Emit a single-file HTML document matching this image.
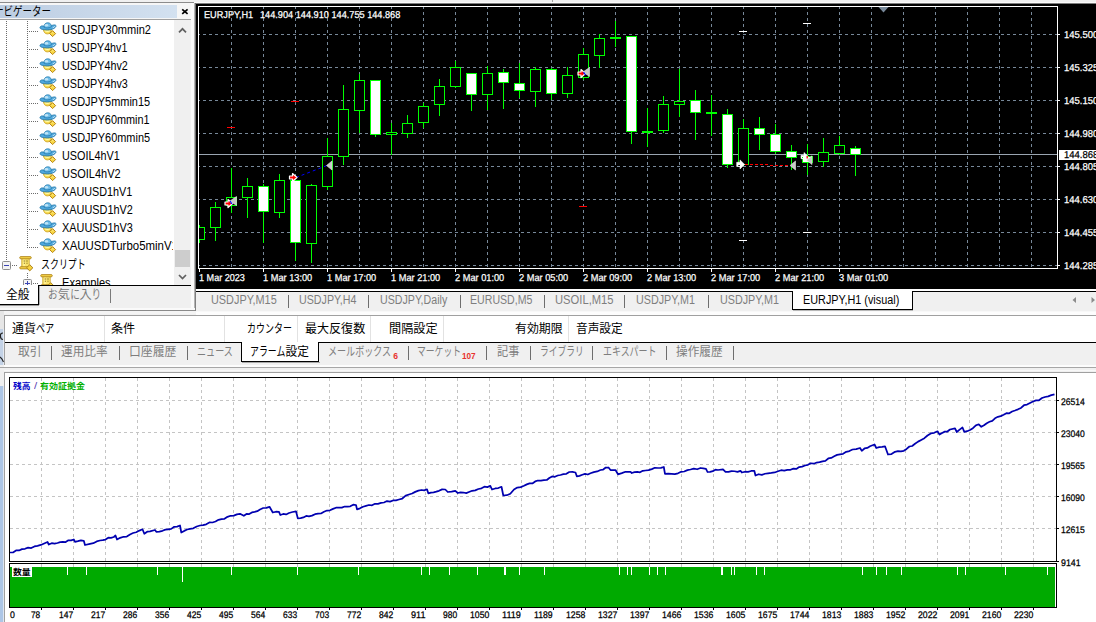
<!DOCTYPE html><html lang="ja"><head><meta charset="utf-8"><title>MT4</title><style>
html,body{margin:0;padding:0;background:#f0f0f0;}
#root{position:relative;width:1096px;height:622px;overflow:hidden;background:#f0f0f0;font-family:"Liberation Sans","Noto Sans CJK JP",sans-serif;}
#root div,#root svg{position:absolute;}
.t{white-space:pre;transform-origin:0 0;}
.gp{text-rendering:geometricPrecision;-webkit-text-stroke:0.25px currentColor;}
.k{display:inline-block;vertical-align:baseline;height:1em;}
.k>span{display:inline-block;transform-origin:0 0;white-space:nowrap;}
#root div.t .k{position:static;}
</style></head><body><div id="root"><div style="left:0px;top:0px;width:1096px;height:2px;background:#f0f0f0;"></div><div style="left:0px;top:2px;width:1096px;height:1px;background:#fbfbfb;"></div><div style="left:0px;top:3px;width:1096px;height:1px;background:#7d7d7d;"></div><div style="left:552px;top:0px;width:1px;height:2px;background:#a0a0a0;"></div><div style="left:0px;top:3px;width:191px;height:308px;background:#f0f0f0;"></div><div style="left:0px;top:2px;width:194px;height:1px;background:#8c8c8c;"></div><div style="left:0px;top:3px;width:191px;height:17px;background:#f6f6f6;"></div><div style="left:0px;top:5px;width:177px;height:13px;background:linear-gradient(90deg,#bccde2,#d3e1f0);"></div><div style="left:0px;top:19px;width:191px;height:1px;background:#a0a0a0;"></div><div style="left:0px;top:20px;width:174px;height:266px;background:#fff;"></div><div style="left:174px;top:20px;width:17px;height:266px;background:#f0f0f0;"></div><div style="left:191px;top:3px;width:4px;height:308px;background:#fafafa;"></div><div style="left:194px;top:3px;width:1px;height:308px;background:#b4b4b4;"></div><div style="left:195px;top:3px;width:1px;height:308px;background:#6e6e6e;"></div><div style="left:175px;top:250px;width:15px;height:17px;background:#cdcdcd;"></div><svg style="left:174px;top:20px" width="17" height="266" viewBox="0 0 17 266"><path d="M5 12.3 L8.5 8.8 L12 12.3" fill="none" stroke="#606060" stroke-width="1.7"/><path d="M5 255 L8.5 258.5 L12 255" fill="none" stroke="#606060" stroke-width="1.7"/></svg><svg style="left:181px;top:8px" width="8" height="7" viewBox="0 0 8 7"><path d="M1.2 1.3 L6.6 5.8 M6.6 1.3 L1.2 5.8" stroke="#000" stroke-width="1.7" fill="none"/></svg><div class="t " style="left:-6.29px;top:5.50px;font-size:12px;line-height:12px;color:#000;transform:scale(0.9875,1);transform-origin:0 10.00px;"><span class="k" style="width:57.6px"><span style="transform:scaleX(0.8)">ナビゲーター</span></span></div><div style="left:6px;top:21px;width:1px;height:239px;background-image:linear-gradient(#6c6c6c 1px,transparent 1px);background-size:1px 2px;"></div><div style="left:27px;top:21px;width:1px;height:227px;background-image:linear-gradient(#6c6c6c 1px,transparent 1px);background-size:1px 2px;"></div><div style="left:27px;top:273px;width:1px;height:6px;background-image:linear-gradient(#6c6c6c 1px,transparent 1px);background-size:1px 2px;"></div><div style="left:29px;top:31px;width:9px;height:1px;background-image:linear-gradient(90deg,#6c6c6c 1px,transparent 1px);background-size:2px 1px;"></div><svg class="ic" style="left:39px;top:21px" width="18" height="17" viewBox="0 0 18 17"><path d="M4.3 8.3 Q5 12.9 8.4 12.9 Q11.9 12.9 12.5 8.3 Z" fill="#f9de52" stroke="#cc9a18" stroke-width=".8"/><path d="M5.8 9.7 Q8.4 10.9 11 9.7" stroke="#fffaae" stroke-width="1.2" fill="none"/><path d="M13.6 9.6 L16.6 12.6 L13.6 15.6 L10.6 12.6 Z" fill="#f7d440" stroke="#b07c0a" stroke-width=".9"/><path d="M12.6 12.6 L13.6 11.4 L14.8 12.6" stroke="#fff0a0" stroke-width=".7" fill="none"/><path d="M1 6.6 C1.2 4.9 3.2 4.6 5 5.2 C7.5 6.6 11.5 6.2 12.6 4.6 C14.4 3.8 17.2 3.6 17 5 C16.6 7.2 12.6 8.9 8.7 8.9 C4.6 8.9 .9 8.3 1 6.6 Z" fill="#4fa8de" stroke="#1f76aa" stroke-width=".9"/><path d="M13.6 6.9 Q15.8 5.9 16.2 4.8" stroke="#c4e6f8" stroke-width="1" fill="none"/><path d="M5 6.2 C5 3.2 6.6 1.8 8.7 1.8 C10.9 1.8 12.3 3 12.4 5.6 C11 7.1 7 7.3 5 6.2 Z" fill="#6dbce9" stroke="#247cb0" stroke-width=".8"/><ellipse cx="7.5" cy="4.2" rx="1.7" ry="1.2" fill="#bfe4f7"/></svg><div class="t " style="left:62.08px;top:24.00px;font-size:12px;line-height:12px;color:#000;transform:scale(0.9200,1);transform-origin:0 10.00px;">USDJPY30mmin2</div><div style="left:29px;top:49px;width:9px;height:1px;background-image:linear-gradient(90deg,#6c6c6c 1px,transparent 1px);background-size:2px 1px;"></div><svg class="ic" style="left:39px;top:39px" width="18" height="17" viewBox="0 0 18 17"><path d="M4.3 8.3 Q5 12.9 8.4 12.9 Q11.9 12.9 12.5 8.3 Z" fill="#f9de52" stroke="#cc9a18" stroke-width=".8"/><path d="M5.8 9.7 Q8.4 10.9 11 9.7" stroke="#fffaae" stroke-width="1.2" fill="none"/><path d="M13.6 9.6 L16.6 12.6 L13.6 15.6 L10.6 12.6 Z" fill="#f7d440" stroke="#b07c0a" stroke-width=".9"/><path d="M12.6 12.6 L13.6 11.4 L14.8 12.6" stroke="#fff0a0" stroke-width=".7" fill="none"/><path d="M1 6.6 C1.2 4.9 3.2 4.6 5 5.2 C7.5 6.6 11.5 6.2 12.6 4.6 C14.4 3.8 17.2 3.6 17 5 C16.6 7.2 12.6 8.9 8.7 8.9 C4.6 8.9 .9 8.3 1 6.6 Z" fill="#4fa8de" stroke="#1f76aa" stroke-width=".9"/><path d="M13.6 6.9 Q15.8 5.9 16.2 4.8" stroke="#c4e6f8" stroke-width="1" fill="none"/><path d="M5 6.2 C5 3.2 6.6 1.8 8.7 1.8 C10.9 1.8 12.3 3 12.4 5.6 C11 7.1 7 7.3 5 6.2 Z" fill="#6dbce9" stroke="#247cb0" stroke-width=".8"/><ellipse cx="7.5" cy="4.2" rx="1.7" ry="1.2" fill="#bfe4f7"/></svg><div class="t " style="left:62.11px;top:42.00px;font-size:12px;line-height:12px;color:#000;transform:scale(0.8903,1);transform-origin:0 10.00px;">USDJPY4hv1</div><div style="left:29px;top:67px;width:9px;height:1px;background-image:linear-gradient(90deg,#6c6c6c 1px,transparent 1px);background-size:2px 1px;"></div><svg class="ic" style="left:39px;top:57px" width="18" height="17" viewBox="0 0 18 17"><path d="M4.3 8.3 Q5 12.9 8.4 12.9 Q11.9 12.9 12.5 8.3 Z" fill="#f9de52" stroke="#cc9a18" stroke-width=".8"/><path d="M5.8 9.7 Q8.4 10.9 11 9.7" stroke="#fffaae" stroke-width="1.2" fill="none"/><path d="M13.6 9.6 L16.6 12.6 L13.6 15.6 L10.6 12.6 Z" fill="#f7d440" stroke="#b07c0a" stroke-width=".9"/><path d="M12.6 12.6 L13.6 11.4 L14.8 12.6" stroke="#fff0a0" stroke-width=".7" fill="none"/><path d="M1 6.6 C1.2 4.9 3.2 4.6 5 5.2 C7.5 6.6 11.5 6.2 12.6 4.6 C14.4 3.8 17.2 3.6 17 5 C16.6 7.2 12.6 8.9 8.7 8.9 C4.6 8.9 .9 8.3 1 6.6 Z" fill="#4fa8de" stroke="#1f76aa" stroke-width=".9"/><path d="M13.6 6.9 Q15.8 5.9 16.2 4.8" stroke="#c4e6f8" stroke-width="1" fill="none"/><path d="M5 6.2 C5 3.2 6.6 1.8 8.7 1.8 C10.9 1.8 12.3 3 12.4 5.6 C11 7.1 7 7.3 5 6.2 Z" fill="#6dbce9" stroke="#247cb0" stroke-width=".8"/><ellipse cx="7.5" cy="4.2" rx="1.7" ry="1.2" fill="#bfe4f7"/></svg><div class="t " style="left:62.10px;top:60.00px;font-size:12px;line-height:12px;color:#000;transform:scale(0.8972,1);transform-origin:0 10.00px;">USDJPY4hv2</div><div style="left:29px;top:85px;width:9px;height:1px;background-image:linear-gradient(90deg,#6c6c6c 1px,transparent 1px);background-size:2px 1px;"></div><svg class="ic" style="left:39px;top:75px" width="18" height="17" viewBox="0 0 18 17"><path d="M4.3 8.3 Q5 12.9 8.4 12.9 Q11.9 12.9 12.5 8.3 Z" fill="#f9de52" stroke="#cc9a18" stroke-width=".8"/><path d="M5.8 9.7 Q8.4 10.9 11 9.7" stroke="#fffaae" stroke-width="1.2" fill="none"/><path d="M13.6 9.6 L16.6 12.6 L13.6 15.6 L10.6 12.6 Z" fill="#f7d440" stroke="#b07c0a" stroke-width=".9"/><path d="M12.6 12.6 L13.6 11.4 L14.8 12.6" stroke="#fff0a0" stroke-width=".7" fill="none"/><path d="M1 6.6 C1.2 4.9 3.2 4.6 5 5.2 C7.5 6.6 11.5 6.2 12.6 4.6 C14.4 3.8 17.2 3.6 17 5 C16.6 7.2 12.6 8.9 8.7 8.9 C4.6 8.9 .9 8.3 1 6.6 Z" fill="#4fa8de" stroke="#1f76aa" stroke-width=".9"/><path d="M13.6 6.9 Q15.8 5.9 16.2 4.8" stroke="#c4e6f8" stroke-width="1" fill="none"/><path d="M5 6.2 C5 3.2 6.6 1.8 8.7 1.8 C10.9 1.8 12.3 3 12.4 5.6 C11 7.1 7 7.3 5 6.2 Z" fill="#6dbce9" stroke="#247cb0" stroke-width=".8"/><ellipse cx="7.5" cy="4.2" rx="1.7" ry="1.2" fill="#bfe4f7"/></svg><div class="t " style="left:62.10px;top:78.00px;font-size:12px;line-height:12px;color:#000;transform:scale(0.8972,1);transform-origin:0 10.00px;">USDJPY4hv3</div><div style="left:29px;top:103px;width:9px;height:1px;background-image:linear-gradient(90deg,#6c6c6c 1px,transparent 1px);background-size:2px 1px;"></div><svg class="ic" style="left:39px;top:93px" width="18" height="17" viewBox="0 0 18 17"><path d="M4.3 8.3 Q5 12.9 8.4 12.9 Q11.9 12.9 12.5 8.3 Z" fill="#f9de52" stroke="#cc9a18" stroke-width=".8"/><path d="M5.8 9.7 Q8.4 10.9 11 9.7" stroke="#fffaae" stroke-width="1.2" fill="none"/><path d="M13.6 9.6 L16.6 12.6 L13.6 15.6 L10.6 12.6 Z" fill="#f7d440" stroke="#b07c0a" stroke-width=".9"/><path d="M12.6 12.6 L13.6 11.4 L14.8 12.6" stroke="#fff0a0" stroke-width=".7" fill="none"/><path d="M1 6.6 C1.2 4.9 3.2 4.6 5 5.2 C7.5 6.6 11.5 6.2 12.6 4.6 C14.4 3.8 17.2 3.6 17 5 C16.6 7.2 12.6 8.9 8.7 8.9 C4.6 8.9 .9 8.3 1 6.6 Z" fill="#4fa8de" stroke="#1f76aa" stroke-width=".9"/><path d="M13.6 6.9 Q15.8 5.9 16.2 4.8" stroke="#c4e6f8" stroke-width="1" fill="none"/><path d="M5 6.2 C5 3.2 6.6 1.8 8.7 1.8 C10.9 1.8 12.3 3 12.4 5.6 C11 7.1 7 7.3 5 6.2 Z" fill="#6dbce9" stroke="#247cb0" stroke-width=".8"/><ellipse cx="7.5" cy="4.2" rx="1.7" ry="1.2" fill="#bfe4f7"/></svg><div class="t " style="left:62.09px;top:96.00px;font-size:12px;line-height:12px;color:#000;transform:scale(0.9104,1);transform-origin:0 10.00px;">USDJPY5mmin15</div><div style="left:29px;top:121px;width:9px;height:1px;background-image:linear-gradient(90deg,#6c6c6c 1px,transparent 1px);background-size:2px 1px;"></div><svg class="ic" style="left:39px;top:111px" width="18" height="17" viewBox="0 0 18 17"><path d="M4.3 8.3 Q5 12.9 8.4 12.9 Q11.9 12.9 12.5 8.3 Z" fill="#f9de52" stroke="#cc9a18" stroke-width=".8"/><path d="M5.8 9.7 Q8.4 10.9 11 9.7" stroke="#fffaae" stroke-width="1.2" fill="none"/><path d="M13.6 9.6 L16.6 12.6 L13.6 15.6 L10.6 12.6 Z" fill="#f7d440" stroke="#b07c0a" stroke-width=".9"/><path d="M12.6 12.6 L13.6 11.4 L14.8 12.6" stroke="#fff0a0" stroke-width=".7" fill="none"/><path d="M1 6.6 C1.2 4.9 3.2 4.6 5 5.2 C7.5 6.6 11.5 6.2 12.6 4.6 C14.4 3.8 17.2 3.6 17 5 C16.6 7.2 12.6 8.9 8.7 8.9 C4.6 8.9 .9 8.3 1 6.6 Z" fill="#4fa8de" stroke="#1f76aa" stroke-width=".9"/><path d="M13.6 6.9 Q15.8 5.9 16.2 4.8" stroke="#c4e6f8" stroke-width="1" fill="none"/><path d="M5 6.2 C5 3.2 6.6 1.8 8.7 1.8 C10.9 1.8 12.3 3 12.4 5.6 C11 7.1 7 7.3 5 6.2 Z" fill="#6dbce9" stroke="#247cb0" stroke-width=".8"/><ellipse cx="7.5" cy="4.2" rx="1.7" ry="1.2" fill="#bfe4f7"/></svg><div class="t " style="left:62.09px;top:114.00px;font-size:12px;line-height:12px;color:#000;transform:scale(0.9052,1);transform-origin:0 10.00px;">USDJPY60mmin1</div><div style="left:29px;top:139px;width:9px;height:1px;background-image:linear-gradient(90deg,#6c6c6c 1px,transparent 1px);background-size:2px 1px;"></div><svg class="ic" style="left:39px;top:129px" width="18" height="17" viewBox="0 0 18 17"><path d="M4.3 8.3 Q5 12.9 8.4 12.9 Q11.9 12.9 12.5 8.3 Z" fill="#f9de52" stroke="#cc9a18" stroke-width=".8"/><path d="M5.8 9.7 Q8.4 10.9 11 9.7" stroke="#fffaae" stroke-width="1.2" fill="none"/><path d="M13.6 9.6 L16.6 12.6 L13.6 15.6 L10.6 12.6 Z" fill="#f7d440" stroke="#b07c0a" stroke-width=".9"/><path d="M12.6 12.6 L13.6 11.4 L14.8 12.6" stroke="#fff0a0" stroke-width=".7" fill="none"/><path d="M1 6.6 C1.2 4.9 3.2 4.6 5 5.2 C7.5 6.6 11.5 6.2 12.6 4.6 C14.4 3.8 17.2 3.6 17 5 C16.6 7.2 12.6 8.9 8.7 8.9 C4.6 8.9 .9 8.3 1 6.6 Z" fill="#4fa8de" stroke="#1f76aa" stroke-width=".9"/><path d="M13.6 6.9 Q15.8 5.9 16.2 4.8" stroke="#c4e6f8" stroke-width="1" fill="none"/><path d="M5 6.2 C5 3.2 6.6 1.8 8.7 1.8 C10.9 1.8 12.3 3 12.4 5.6 C11 7.1 7 7.3 5 6.2 Z" fill="#6dbce9" stroke="#247cb0" stroke-width=".8"/><ellipse cx="7.5" cy="4.2" rx="1.7" ry="1.2" fill="#bfe4f7"/></svg><div class="t " style="left:62.09px;top:132.00px;font-size:12px;line-height:12px;color:#000;transform:scale(0.9104,1);transform-origin:0 10.00px;">USDJPY60mmin5</div><div style="left:29px;top:157px;width:9px;height:1px;background-image:linear-gradient(90deg,#6c6c6c 1px,transparent 1px);background-size:2px 1px;"></div><svg class="ic" style="left:39px;top:147px" width="18" height="17" viewBox="0 0 18 17"><path d="M4.3 8.3 Q5 12.9 8.4 12.9 Q11.9 12.9 12.5 8.3 Z" fill="#f9de52" stroke="#cc9a18" stroke-width=".8"/><path d="M5.8 9.7 Q8.4 10.9 11 9.7" stroke="#fffaae" stroke-width="1.2" fill="none"/><path d="M13.6 9.6 L16.6 12.6 L13.6 15.6 L10.6 12.6 Z" fill="#f7d440" stroke="#b07c0a" stroke-width=".9"/><path d="M12.6 12.6 L13.6 11.4 L14.8 12.6" stroke="#fff0a0" stroke-width=".7" fill="none"/><path d="M1 6.6 C1.2 4.9 3.2 4.6 5 5.2 C7.5 6.6 11.5 6.2 12.6 4.6 C14.4 3.8 17.2 3.6 17 5 C16.6 7.2 12.6 8.9 8.7 8.9 C4.6 8.9 .9 8.3 1 6.6 Z" fill="#4fa8de" stroke="#1f76aa" stroke-width=".9"/><path d="M13.6 6.9 Q15.8 5.9 16.2 4.8" stroke="#c4e6f8" stroke-width="1" fill="none"/><path d="M5 6.2 C5 3.2 6.6 1.8 8.7 1.8 C10.9 1.8 12.3 3 12.4 5.6 C11 7.1 7 7.3 5 6.2 Z" fill="#6dbce9" stroke="#247cb0" stroke-width=".8"/><ellipse cx="7.5" cy="4.2" rx="1.7" ry="1.2" fill="#bfe4f7"/></svg><div class="t " style="left:62.10px;top:150.00px;font-size:12px;line-height:12px;color:#000;transform:scale(0.9016,1);transform-origin:0 10.00px;">USOIL4hV1</div><div style="left:29px;top:175px;width:9px;height:1px;background-image:linear-gradient(90deg,#6c6c6c 1px,transparent 1px);background-size:2px 1px;"></div><svg class="ic" style="left:39px;top:165px" width="18" height="17" viewBox="0 0 18 17"><path d="M4.3 8.3 Q5 12.9 8.4 12.9 Q11.9 12.9 12.5 8.3 Z" fill="#f9de52" stroke="#cc9a18" stroke-width=".8"/><path d="M5.8 9.7 Q8.4 10.9 11 9.7" stroke="#fffaae" stroke-width="1.2" fill="none"/><path d="M13.6 9.6 L16.6 12.6 L13.6 15.6 L10.6 12.6 Z" fill="#f7d440" stroke="#b07c0a" stroke-width=".9"/><path d="M12.6 12.6 L13.6 11.4 L14.8 12.6" stroke="#fff0a0" stroke-width=".7" fill="none"/><path d="M1 6.6 C1.2 4.9 3.2 4.6 5 5.2 C7.5 6.6 11.5 6.2 12.6 4.6 C14.4 3.8 17.2 3.6 17 5 C16.6 7.2 12.6 8.9 8.7 8.9 C4.6 8.9 .9 8.3 1 6.6 Z" fill="#4fa8de" stroke="#1f76aa" stroke-width=".9"/><path d="M13.6 6.9 Q15.8 5.9 16.2 4.8" stroke="#c4e6f8" stroke-width="1" fill="none"/><path d="M5 6.2 C5 3.2 6.6 1.8 8.7 1.8 C10.9 1.8 12.3 3 12.4 5.6 C11 7.1 7 7.3 5 6.2 Z" fill="#6dbce9" stroke="#247cb0" stroke-width=".8"/><ellipse cx="7.5" cy="4.2" rx="1.7" ry="1.2" fill="#bfe4f7"/></svg><div class="t " style="left:62.09px;top:168.00px;font-size:12px;line-height:12px;color:#000;transform:scale(0.9143,1);transform-origin:0 10.00px;">USOIL4hV2</div><div style="left:29px;top:193px;width:9px;height:1px;background-image:linear-gradient(90deg,#6c6c6c 1px,transparent 1px);background-size:2px 1px;"></div><svg class="ic" style="left:39px;top:183px" width="18" height="17" viewBox="0 0 18 17"><path d="M4.3 8.3 Q5 12.9 8.4 12.9 Q11.9 12.9 12.5 8.3 Z" fill="#f9de52" stroke="#cc9a18" stroke-width=".8"/><path d="M5.8 9.7 Q8.4 10.9 11 9.7" stroke="#fffaae" stroke-width="1.2" fill="none"/><path d="M13.6 9.6 L16.6 12.6 L13.6 15.6 L10.6 12.6 Z" fill="#f7d440" stroke="#b07c0a" stroke-width=".9"/><path d="M12.6 12.6 L13.6 11.4 L14.8 12.6" stroke="#fff0a0" stroke-width=".7" fill="none"/><path d="M1 6.6 C1.2 4.9 3.2 4.6 5 5.2 C7.5 6.6 11.5 6.2 12.6 4.6 C14.4 3.8 17.2 3.6 17 5 C16.6 7.2 12.6 8.9 8.7 8.9 C4.6 8.9 .9 8.3 1 6.6 Z" fill="#4fa8de" stroke="#1f76aa" stroke-width=".9"/><path d="M13.6 6.9 Q15.8 5.9 16.2 4.8" stroke="#c4e6f8" stroke-width="1" fill="none"/><path d="M5 6.2 C5 3.2 6.6 1.8 8.7 1.8 C10.9 1.8 12.3 3 12.4 5.6 C11 7.1 7 7.3 5 6.2 Z" fill="#6dbce9" stroke="#247cb0" stroke-width=".8"/><ellipse cx="7.5" cy="4.2" rx="1.7" ry="1.2" fill="#bfe4f7"/></svg><div class="t " style="left:62.40px;top:186.00px;font-size:12px;line-height:12px;color:#000;transform:scale(0.9013,1);transform-origin:0 10.00px;">XAUUSD1hV1</div><div style="left:29px;top:211px;width:9px;height:1px;background-image:linear-gradient(90deg,#6c6c6c 1px,transparent 1px);background-size:2px 1px;"></div><svg class="ic" style="left:39px;top:201px" width="18" height="17" viewBox="0 0 18 17"><path d="M4.3 8.3 Q5 12.9 8.4 12.9 Q11.9 12.9 12.5 8.3 Z" fill="#f9de52" stroke="#cc9a18" stroke-width=".8"/><path d="M5.8 9.7 Q8.4 10.9 11 9.7" stroke="#fffaae" stroke-width="1.2" fill="none"/><path d="M13.6 9.6 L16.6 12.6 L13.6 15.6 L10.6 12.6 Z" fill="#f7d440" stroke="#b07c0a" stroke-width=".9"/><path d="M12.6 12.6 L13.6 11.4 L14.8 12.6" stroke="#fff0a0" stroke-width=".7" fill="none"/><path d="M1 6.6 C1.2 4.9 3.2 4.6 5 5.2 C7.5 6.6 11.5 6.2 12.6 4.6 C14.4 3.8 17.2 3.6 17 5 C16.6 7.2 12.6 8.9 8.7 8.9 C4.6 8.9 .9 8.3 1 6.6 Z" fill="#4fa8de" stroke="#1f76aa" stroke-width=".9"/><path d="M13.6 6.9 Q15.8 5.9 16.2 4.8" stroke="#c4e6f8" stroke-width="1" fill="none"/><path d="M5 6.2 C5 3.2 6.6 1.8 8.7 1.8 C10.9 1.8 12.3 3 12.4 5.6 C11 7.1 7 7.3 5 6.2 Z" fill="#6dbce9" stroke="#247cb0" stroke-width=".8"/><ellipse cx="7.5" cy="4.2" rx="1.7" ry="1.2" fill="#bfe4f7"/></svg><div class="t " style="left:62.40px;top:204.00px;font-size:12px;line-height:12px;color:#000;transform:scale(0.9077,1);transform-origin:0 10.00px;">XAUUSD1hV2</div><div style="left:29px;top:229px;width:9px;height:1px;background-image:linear-gradient(90deg,#6c6c6c 1px,transparent 1px);background-size:2px 1px;"></div><svg class="ic" style="left:39px;top:219px" width="18" height="17" viewBox="0 0 18 17"><path d="M4.3 8.3 Q5 12.9 8.4 12.9 Q11.9 12.9 12.5 8.3 Z" fill="#f9de52" stroke="#cc9a18" stroke-width=".8"/><path d="M5.8 9.7 Q8.4 10.9 11 9.7" stroke="#fffaae" stroke-width="1.2" fill="none"/><path d="M13.6 9.6 L16.6 12.6 L13.6 15.6 L10.6 12.6 Z" fill="#f7d440" stroke="#b07c0a" stroke-width=".9"/><path d="M12.6 12.6 L13.6 11.4 L14.8 12.6" stroke="#fff0a0" stroke-width=".7" fill="none"/><path d="M1 6.6 C1.2 4.9 3.2 4.6 5 5.2 C7.5 6.6 11.5 6.2 12.6 4.6 C14.4 3.8 17.2 3.6 17 5 C16.6 7.2 12.6 8.9 8.7 8.9 C4.6 8.9 .9 8.3 1 6.6 Z" fill="#4fa8de" stroke="#1f76aa" stroke-width=".9"/><path d="M13.6 6.9 Q15.8 5.9 16.2 4.8" stroke="#c4e6f8" stroke-width="1" fill="none"/><path d="M5 6.2 C5 3.2 6.6 1.8 8.7 1.8 C10.9 1.8 12.3 3 12.4 5.6 C11 7.1 7 7.3 5 6.2 Z" fill="#6dbce9" stroke="#247cb0" stroke-width=".8"/><ellipse cx="7.5" cy="4.2" rx="1.7" ry="1.2" fill="#bfe4f7"/></svg><div class="t " style="left:62.40px;top:222.00px;font-size:12px;line-height:12px;color:#000;transform:scale(0.9077,1);transform-origin:0 10.00px;">XAUUSD1hV3</div><div style="left:29px;top:247px;width:9px;height:1px;background-image:linear-gradient(90deg,#6c6c6c 1px,transparent 1px);background-size:2px 1px;"></div><svg class="ic" style="left:39px;top:237px" width="18" height="17" viewBox="0 0 18 17"><path d="M4.3 8.3 Q5 12.9 8.4 12.9 Q11.9 12.9 12.5 8.3 Z" fill="#f9de52" stroke="#cc9a18" stroke-width=".8"/><path d="M5.8 9.7 Q8.4 10.9 11 9.7" stroke="#fffaae" stroke-width="1.2" fill="none"/><path d="M13.6 9.6 L16.6 12.6 L13.6 15.6 L10.6 12.6 Z" fill="#f7d440" stroke="#b07c0a" stroke-width=".9"/><path d="M12.6 12.6 L13.6 11.4 L14.8 12.6" stroke="#fff0a0" stroke-width=".7" fill="none"/><path d="M1 6.6 C1.2 4.9 3.2 4.6 5 5.2 C7.5 6.6 11.5 6.2 12.6 4.6 C14.4 3.8 17.2 3.6 17 5 C16.6 7.2 12.6 8.9 8.7 8.9 C4.6 8.9 .9 8.3 1 6.6 Z" fill="#4fa8de" stroke="#1f76aa" stroke-width=".9"/><path d="M13.6 6.9 Q15.8 5.9 16.2 4.8" stroke="#c4e6f8" stroke-width="1" fill="none"/><path d="M5 6.2 C5 3.2 6.6 1.8 8.7 1.8 C10.9 1.8 12.3 3 12.4 5.6 C11 7.1 7 7.3 5 6.2 Z" fill="#6dbce9" stroke="#247cb0" stroke-width=".8"/><ellipse cx="7.5" cy="4.2" rx="1.7" ry="1.2" fill="#bfe4f7"/></svg><div style="left:0;top:20px;width:173px;height:266px;overflow:hidden;background:none" id="clip1"><div class="t " style="left:62.40px;top:220.00px;font-size:12px;line-height:12px;color:#000;transform:scale(0.9533,1);transform-origin:0 10.00px;">XAUUSDTurbo5minV1</div></div><svg class="ic" style="left:2px;top:261px" width="9" height="9" viewBox="0 0 9 9"><rect x=".5" y=".5" width="8" height="8" rx="1" fill="#f4f4f4" stroke="#8e8e8e"/><path d="M2 4.5 h5" stroke="#3c46b4" stroke-width="1"/></svg><div style="left:12px;top:265px;width:6px;height:1px;background-image:linear-gradient(90deg,#6c6c6c 1px,transparent 1px);background-size:2px 1px;"></div><svg class="ic" style="left:18.6px;top:255.6px" width="16" height="16" viewBox="0 0 16 16"><rect x="2.8" y="2" width="7.4" height="10" fill="#fae46c" stroke="#c9a227" stroke-width=".8"/><rect x="4" y="3" width="2.2" height="8" fill="#fff3a0" opacity=".7"/><rect x=".7" y=".6" width="11.6" height="2.2" rx="1.1" fill="#f5d348" stroke="#a87c14" stroke-width=".8"/><rect x=".7" y="10.7" width="11.6" height="2.2" rx="1.1" fill="#f5d348" stroke="#a87c14" stroke-width=".8"/><path d="M4.6 5 h1.6 M7.2 5 h1.6 M4.8 7.2 h1.2 M7.4 7.2 h1.2" stroke="#8a7420" stroke-width="1"/><path d="M10.7 8.7 L13.9 11.8 L10.7 14.9 L7.6 11.8 Z" fill="#f6d23e" stroke="#a87c14" stroke-width=".9"/></svg><div class="t " style="left:40.59px;top:258.80px;font-size:12px;line-height:12px;color:#000;transform:scale(1.0071,1);transform-origin:0 10.00px;"><span class="k" style="width:44.4px"><span style="transform:scaleX(0.74)">スクリプト</span></span></div><div style="left:0;top:270px;width:174px;height:15px;overflow:hidden;background:none" id="clip2"><svg class="ic" style="left:23px;top:9px" width="9" height="9" viewBox="0 0 9 9"><rect x=".5" y=".5" width="8" height="8" rx="1" fill="#f4f4f4" stroke="#8e8e8e"/><path d="M2 4.5 h5 M4.5 2 v5" stroke="#3c46b4" stroke-width="1"/></svg><div style="left:33px;top:13px;width:6px;height:1px;background-image:linear-gradient(90deg,#6c6c6c 1px,transparent 1px);background-size:2px 1px;"></div><svg class="ic" style="left:39.6px;top:3.8px" width="16" height="16" viewBox="0 0 16 16"><rect x="2.8" y="2" width="7.4" height="10" fill="#fae46c" stroke="#c9a227" stroke-width=".8"/><rect x="4" y="3" width="2.2" height="8" fill="#fff3a0" opacity=".7"/><rect x=".7" y=".6" width="11.6" height="2.2" rx="1.1" fill="#f5d348" stroke="#a87c14" stroke-width=".8"/><rect x=".7" y="10.7" width="11.6" height="2.2" rx="1.1" fill="#f5d348" stroke="#a87c14" stroke-width=".8"/><path d="M4.6 5 h1.6 M7.2 5 h1.6 M4.8 7.2 h1.2 M7.4 7.2 h1.2" stroke="#8a7420" stroke-width="1"/><path d="M10.7 8.7 L13.9 11.8 L10.7 14.9 L7.6 11.8 Z" fill="#f6d23e" stroke="#a87c14" stroke-width=".9"/></svg><div class="t " style="left:62.08px;top:7.00px;font-size:12px;line-height:12px;color:#000;transform:scale(0.9231,1);transform-origin:0 10.00px;">Examples</div></div><div style="left:38px;top:285px;width:153px;height:1px;background:#000;"></div><div style="left:0px;top:286px;width:38px;height:18px;background:#fff;"></div><div style="left:38px;top:286px;width:1px;height:19px;background:#000;"></div><div style="left:0px;top:304px;width:39px;height:1px;background:#000;"></div><div style="left:0px;top:305px;width:39px;height:1px;background:#9a9a9a;"></div><div style="left:39px;top:286px;width:1px;height:19px;background:#b0b0b0;"></div><div class="t " style="left:5.60px;top:289.20px;font-size:12px;line-height:12px;color:#000;transform:scale(0.9750,1);transform-origin:0 10.00px;">全般</div><div class="t " style="left:48.49px;top:289.20px;font-size:12px;line-height:12px;color:#7a7a7a;transform:scale(1.0100,1);transform-origin:0 10.00px;"><span class="k" style="width:9.6px"><span style="transform:scaleX(0.8)">お</span></span>気<span class="k" style="width:9.6px"><span style="transform:scaleX(0.8)">に</span></span>入<span class="k" style="width:9.6px"><span style="transform:scaleX(0.8)">り</span></span></div><div style="left:110px;top:289px;width:1px;height:14px;background:#7a7a7a;"></div><div style="left:0px;top:308px;width:195px;height:2px;background:#fafafa;"></div><div style="left:0px;top:310px;width:196px;height:1px;background:#8a8a8a;"></div><div style="left:0px;top:311px;width:1096px;height:3px;background:#f4f4f4;"></div><div style="left:196px;top:4px;width:900px;height:285px;background:#000;"></div><svg id="chart" style="left:196px;top:4px" width="900" height="285" viewBox="196 4 900 285" shape-rendering="crispEdges"><path d="M231.5 7 V268" stroke="#778899" stroke-dasharray="3 3" stroke-dashoffset="1"/><path d="M263.5 7 V268" stroke="#778899" stroke-dasharray="3 3" stroke-dashoffset="1"/><path d="M295.5 7 V268" stroke="#778899" stroke-dasharray="3 3" stroke-dashoffset="1"/><path d="M327.5 7 V268" stroke="#778899" stroke-dasharray="3 3" stroke-dashoffset="1"/><path d="M359.5 7 V268" stroke="#778899" stroke-dasharray="3 3" stroke-dashoffset="1"/><path d="M391.5 7 V268" stroke="#778899" stroke-dasharray="3 3" stroke-dashoffset="1"/><path d="M423.5 7 V268" stroke="#778899" stroke-dasharray="3 3" stroke-dashoffset="1"/><path d="M455.5 7 V268" stroke="#778899" stroke-dasharray="3 3" stroke-dashoffset="1"/><path d="M487.5 7 V268" stroke="#778899" stroke-dasharray="3 3" stroke-dashoffset="1"/><path d="M519.5 7 V268" stroke="#778899" stroke-dasharray="3 3" stroke-dashoffset="1"/><path d="M551.5 7 V268" stroke="#778899" stroke-dasharray="3 3" stroke-dashoffset="1"/><path d="M583.5 7 V268" stroke="#778899" stroke-dasharray="3 3" stroke-dashoffset="1"/><path d="M615.5 7 V268" stroke="#778899" stroke-dasharray="3 3" stroke-dashoffset="1"/><path d="M647.5 7 V268" stroke="#778899" stroke-dasharray="3 3" stroke-dashoffset="1"/><path d="M679.5 7 V268" stroke="#778899" stroke-dasharray="3 3" stroke-dashoffset="1"/><path d="M711.5 7 V268" stroke="#778899" stroke-dasharray="3 3" stroke-dashoffset="1"/><path d="M743.5 7 V268" stroke="#778899" stroke-dasharray="3 3" stroke-dashoffset="1"/><path d="M775.5 7 V268" stroke="#778899" stroke-dasharray="3 3" stroke-dashoffset="1"/><path d="M807.5 7 V268" stroke="#778899" stroke-dasharray="3 3" stroke-dashoffset="1"/><path d="M839.5 7 V268" stroke="#778899" stroke-dasharray="3 3" stroke-dashoffset="1"/><path d="M871.5 7 V268" stroke="#778899" stroke-dasharray="3 3" stroke-dashoffset="1"/><path d="M903.5 7 V268" stroke="#778899" stroke-dasharray="3 3" stroke-dashoffset="1"/><path d="M935.5 7 V268" stroke="#778899" stroke-dasharray="3 3" stroke-dashoffset="1"/><path d="M967.5 7 V268" stroke="#778899" stroke-dasharray="3 3" stroke-dashoffset="1"/><path d="M999.5 7 V268" stroke="#778899" stroke-dasharray="3 3" stroke-dashoffset="1"/><path d="M1031.5 7 V268" stroke="#778899" stroke-dasharray="3 3" stroke-dashoffset="1"/><path d="M199 34.5 H1057" stroke="#778899" stroke-dasharray="3 3" stroke-dashoffset="2"/><path d="M199 67.5 H1057" stroke="#778899" stroke-dasharray="3 3" stroke-dashoffset="2"/><path d="M199 100.5 H1057" stroke="#778899" stroke-dasharray="3 3" stroke-dashoffset="2"/><path d="M199 133.5 H1057" stroke="#778899" stroke-dasharray="3 3" stroke-dashoffset="2"/><path d="M199 166.5 H1057" stroke="#778899" stroke-dasharray="3 3" stroke-dashoffset="2"/><path d="M199 199.5 H1057" stroke="#778899" stroke-dasharray="3 3" stroke-dashoffset="2"/><path d="M199 232.5 H1057" stroke="#778899" stroke-dasharray="3 3" stroke-dashoffset="2"/><path d="M199 265.5 H1057" stroke="#778899" stroke-dasharray="3 3" stroke-dashoffset="2"/><path d="M199 154.5 H1057" stroke="#9aa5b1"/><path d="M198.5 268.5 V6.5 H1057.5 V268.5 Z" fill="none" stroke="#fff"/><path d="M1058 34.5 h2" stroke="#fff"/><path d="M1058 67.5 h2" stroke="#fff"/><path d="M1058 100.5 h2" stroke="#fff"/><path d="M1058 133.5 h2" stroke="#fff"/><path d="M1058 166.5 h2" stroke="#fff"/><path d="M1058 199.5 h2" stroke="#fff"/><path d="M1058 232.5 h2" stroke="#fff"/><path d="M1058 265.5 h2" stroke="#fff"/><path d="M199.5 269 v3" stroke="#fff"/><path d="M263.5 269 v3" stroke="#fff"/><path d="M327.5 269 v3" stroke="#fff"/><path d="M391.5 269 v3" stroke="#fff"/><path d="M455.5 269 v3" stroke="#fff"/><path d="M519.5 269 v3" stroke="#fff"/><path d="M583.5 269 v3" stroke="#fff"/><path d="M647.5 269 v3" stroke="#fff"/><path d="M711.5 269 v3" stroke="#fff"/><path d="M775.5 269 v3" stroke="#fff"/><path d="M839.5 269 v3" stroke="#fff"/><path d="M199.5 225 V243" stroke="#0f0"/><rect x="198.5" y="227.5" width="6" height="12" fill="#000" stroke="#0f0"/><path d="M215.5 202 V241" stroke="#0f0"/><rect x="210.5" y="207.5" width="10" height="20" fill="#000" stroke="#0f0"/><path d="M231.5 168 V213" stroke="#0f0"/><rect x="226.5" y="197.5" width="10" height="8" fill="#000" stroke="#0f0"/><path d="M247.5 178 V218" stroke="#0f0"/><rect x="242.5" y="186.5" width="10" height="11" fill="#000" stroke="#0f0"/><path d="M263.5 184 V243" stroke="#0f0"/><rect x="258.5" y="186.5" width="10" height="25" fill="#fff" stroke="#0f0"/><path d="M279.5 174 V218" stroke="#0f0"/><rect x="274.5" y="180.5" width="10" height="32" fill="#000" stroke="#0f0"/><path d="M295.5 180 V261" stroke="#0f0"/><rect x="290.5" y="180.5" width="10" height="62" fill="#fff" stroke="#0f0"/><path d="M311.5 184 V263" stroke="#0f0"/><rect x="306.5" y="185.5" width="10" height="58" fill="#000" stroke="#0f0"/><path d="M327.5 138 V190" stroke="#0f0"/><rect x="322.5" y="156.5" width="10" height="30" fill="#000" stroke="#0f0"/><path d="M343.5 85 V165" stroke="#0f0"/><rect x="338.5" y="109.5" width="10" height="47" fill="#000" stroke="#0f0"/><path d="M359.5 74 V133" stroke="#0f0"/><rect x="354.5" y="80.5" width="10" height="30" fill="#000" stroke="#0f0"/><path d="M375.5 80 V137" stroke="#0f0"/><rect x="370.5" y="80.5" width="10" height="54" fill="#fff" stroke="#0f0"/><path d="M391.5 123 V155" stroke="#0f0"/><rect x="386.5" y="132.5" width="10" height="2" fill="#000" stroke="#0f0"/><path d="M407.5 115 V138" stroke="#0f0"/><rect x="402.5" y="123.5" width="10" height="10" fill="#000" stroke="#0f0"/><path d="M423.5 103 V128" stroke="#0f0"/><rect x="418.5" y="106.5" width="10" height="16" fill="#000" stroke="#0f0"/><path d="M439.5 79 V116" stroke="#0f0"/><rect x="434.5" y="86.5" width="10" height="18" fill="#000" stroke="#0f0"/><path d="M455.5 61 V88" stroke="#0f0"/><rect x="450.5" y="67.5" width="10" height="19" fill="#000" stroke="#0f0"/><path d="M471.5 73 V111" stroke="#0f0"/><rect x="466.5" y="73.5" width="10" height="21" fill="#fff" stroke="#0f0"/><path d="M487.5 66 V110" stroke="#0f0"/><rect x="482.5" y="73.5" width="10" height="21" fill="#000" stroke="#0f0"/><path d="M503.5 69 V109" stroke="#0f0"/><rect x="498.5" y="72.5" width="10" height="10" fill="#fff" stroke="#0f0"/><path d="M519.5 63 V98" stroke="#0f0"/><rect x="514.5" y="83.5" width="10" height="7" fill="#fff" stroke="#0f0"/><path d="M535.5 67 V107" stroke="#0f0"/><rect x="530.5" y="69.5" width="10" height="22" fill="#000" stroke="#0f0"/><path d="M551.5 68 V100" stroke="#0f0"/><rect x="546.5" y="69.5" width="10" height="24" fill="#fff" stroke="#0f0"/><path d="M567.5 67 V98" stroke="#0f0"/><rect x="562.5" y="75.5" width="10" height="18" fill="#000" stroke="#0f0"/><path d="M583.5 48 V80" stroke="#0f0"/><rect x="578.5" y="54.5" width="10" height="23" fill="#000" stroke="#0f0"/><path d="M599.5 34 V68" stroke="#0f0"/><rect x="594.5" y="38.5" width="10" height="17" fill="#000" stroke="#0f0"/><path d="M615.5 21 V47" stroke="#0f0"/><rect x="610.5" y="37.5" width="10" height="1" fill="#000" stroke="#0f0"/><path d="M631.5 36 V144" stroke="#0f0"/><rect x="626.5" y="36.5" width="10" height="95" fill="#fff" stroke="#0f0"/><path d="M647.5 108 V147" stroke="#0f0"/><rect x="642.5" y="131.5" width="10" height="1" fill="#000" stroke="#0f0"/><path d="M663.5 96 V133" stroke="#0f0"/><rect x="658.5" y="104.5" width="10" height="26" fill="#000" stroke="#0f0"/><path d="M679.5 69 V117" stroke="#0f0"/><rect x="674.5" y="101.5" width="10" height="3" fill="#000" stroke="#0f0"/><path d="M695.5 90 V140" stroke="#0f0"/><rect x="690.5" y="100.5" width="10" height="12" fill="#fff" stroke="#0f0"/><path d="M711.5 95 V136" stroke="#0f0"/><rect x="706.5" y="112.5" width="10" height="1" fill="#000" stroke="#0f0"/><path d="M727.5 109 V168" stroke="#0f0"/><rect x="722.5" y="114.5" width="10" height="50" fill="#fff" stroke="#0f0"/><path d="M743.5 119 V166" stroke="#0f0"/><rect x="738.5" y="128.5" width="10" height="36" fill="#000" stroke="#0f0"/><path d="M759.5 117 V150" stroke="#0f0"/><rect x="754.5" y="128.5" width="10" height="6" fill="#fff" stroke="#0f0"/><path d="M775.5 124 V154" stroke="#0f0"/><rect x="770.5" y="134.5" width="10" height="17" fill="#fff" stroke="#0f0"/><path d="M791.5 145 V170" stroke="#0f0"/><rect x="786.5" y="151.5" width="10" height="6" fill="#fff" stroke="#0f0"/><path d="M807.5 144 V175" stroke="#0f0"/><rect x="802.5" y="156.5" width="10" height="6" fill="#fff" stroke="#0f0"/><path d="M823.5 138 V167" stroke="#0f0"/><rect x="818.5" y="152.5" width="10" height="9" fill="#000" stroke="#0f0"/><path d="M839.5 136 V155" stroke="#0f0"/><rect x="834.5" y="145.5" width="10" height="8" fill="#000" stroke="#0f0"/><path d="M855.5 146 V176" stroke="#0f0"/><rect x="850.5" y="148.5" width="10" height="6" fill="#fff" stroke="#0f0"/><path d="M198.5 225 V243" stroke="#fff"/><path d="M227 127.5 h8" stroke="#f00"/><path d="M291 101.5 h8" stroke="#f00"/><path d="M579 206.5 h8" stroke="#f00"/><path d="M739 31.5 h8" stroke="#fff"/><path d="M803 23.5 h8" stroke="#fff"/><path d="M739 240.5 h8" stroke="#fff"/><path d="M803 232.5 h8" stroke="#fff"/><path d="M296 177.5 L327 165.5" stroke="#00f" stroke-dasharray="3 3" shape-rendering="auto"/><path d="M745 164.5 H768 L772 165.5 H790" stroke="#f00" stroke-dasharray="3 2" fill="none"/></svg><svg style="left:196px;top:4px" width="900" height="285" viewBox="196 4 900 285"><path d="M225 202.0 h3 v-2.5 l4.5 4 l-4.5 4 v-2.5 h-3 z" fill="#f00" stroke="#fff" stroke-width="1.2" stroke-linejoin="round"/><path d="M230 201 l6.5 -4.5 v9.0 z" fill="#c8c8c8" stroke="#e6e6e6" stroke-width=".6"/><path d="M230 201 l2 3" stroke="#00f" stroke-width="1.2"/><path d="M289.5 176.0 h3 v-2.5 l4.5 4 l-4.5 4 v-2.5 h-3 z" fill="#f00" stroke="#fff" stroke-width="1.2" stroke-linejoin="round"/><path d="M326.5 165.5 l5.5 -4.5 v9.0 z" fill="#c8c8c8" stroke="#e6e6e6" stroke-width=".6"/><path d="M578 72.0 h3 v-2.5 l4.5 4 l-4.5 4 v-2.5 h-3 z" fill="#f00" stroke="#fff" stroke-width="1.2" stroke-linejoin="round"/><path d="M583 72 l6.5 -4.5 v9.0 z" fill="#c8c8c8" stroke="#e6e6e6" stroke-width=".6"/><path d="M583.5 72 l2 3" stroke="#00f" stroke-width="1.2"/><path d="M736.7 162.3 h3.3 v-2.4 l4.6 4.5 l-4.6 4.5 v-2.4 h-3.3 z" fill="#fff" stroke="#fff" stroke-width=".6"/><rect x="738.3" y="165" width="1.6" height="1" fill="#000"/><path d="M790 165.5 l5.5 -4.5 v9.0 z" fill="#c8c8c8" stroke="#e6e6e6" stroke-width=".6"/><path d="M801 155.3 h3 v-2.8 l4.6 4.5 l-4.6 4.5 v-2.8 h-3 z" fill="#fff" stroke="#fff" stroke-width=".6"/><path d="M806.7 160.2 l5.3 -4.4 v8.8 z" fill="#c8c8c8" stroke="#e6e6e6" stroke-width=".6"/><path d="M807.2 156 v2.6" stroke="#f00" stroke-width="1.3"/><rect x="802" y="157" width="1" height="1" fill="#0f0"/><path d="M878.5 7 h10 l-5 5.5 z" fill="#778899"/></svg><div class="t gp" style="left:204.20px;top:10.50px;font-size:10px;line-height:10px;color:#fff;transform:scale(0.9148,1);transform-origin:0 8.50px;">EURJPY,H1</div><div class="t gp" style="left:260.40px;top:10.50px;font-size:10px;line-height:10px;color:#fff;transform:scale(0.9176,1);transform-origin:0 8.50px;">144.904 144.910 144.755 144.868</div><div class="t gp" style="left:1063.90px;top:30.50px;font-size:10px;line-height:10px;color:#fff;transform:scale(0.9500,1);transform-origin:0 8.50px;">145.500</div><div class="t gp" style="left:1063.90px;top:63.50px;font-size:10px;line-height:10px;color:#fff;transform:scale(0.9500,1);transform-origin:0 8.50px;">145.325</div><div class="t gp" style="left:1063.90px;top:96.50px;font-size:10px;line-height:10px;color:#fff;transform:scale(0.9500,1);transform-origin:0 8.50px;">145.150</div><div class="t gp" style="left:1063.90px;top:129.50px;font-size:10px;line-height:10px;color:#fff;transform:scale(0.9500,1);transform-origin:0 8.50px;">144.980</div><div class="t gp" style="left:1063.90px;top:162.50px;font-size:10px;line-height:10px;color:#fff;transform:scale(0.9500,1);transform-origin:0 8.50px;">144.805</div><div class="t gp" style="left:1063.90px;top:195.50px;font-size:10px;line-height:10px;color:#fff;transform:scale(0.9500,1);transform-origin:0 8.50px;">144.630</div><div class="t gp" style="left:1063.90px;top:228.50px;font-size:10px;line-height:10px;color:#fff;transform:scale(0.9500,1);transform-origin:0 8.50px;">144.455</div><div class="t gp" style="left:1063.90px;top:261.50px;font-size:10px;line-height:10px;color:#fff;transform:scale(0.9500,1);transform-origin:0 8.50px;">144.285</div><div style="left:1059px;top:150px;width:37px;height:10px;background:#fff;"></div><div class="t gp" style="left:1063.90px;top:151.00px;font-size:10px;line-height:10px;color:#000;transform:scale(0.9500,1);transform-origin:0 8.50px;">144.868</div><div class="t gp" style="left:198.60px;top:273.70px;font-size:10px;line-height:10px;color:#fff;transform:scale(0.9078,1);transform-origin:0 8.50px;">1 Mar 2023</div><div class="t gp" style="left:262.60px;top:273.70px;font-size:10px;line-height:10px;color:#fff;transform:scale(0.9226,1);transform-origin:0 8.50px;">1 Mar 13:00</div><div class="t gp" style="left:326.60px;top:273.70px;font-size:10px;line-height:10px;color:#fff;transform:scale(0.9226,1);transform-origin:0 8.50px;">1 Mar 17:00</div><div class="t gp" style="left:390.60px;top:273.70px;font-size:10px;line-height:10px;color:#fff;transform:scale(0.9226,1);transform-origin:0 8.50px;">1 Mar 21:00</div><div class="t gp" style="left:454.60px;top:273.70px;font-size:10px;line-height:10px;color:#fff;transform:scale(0.9226,1);transform-origin:0 8.50px;">2 Mar 01:00</div><div class="t gp" style="left:518.60px;top:273.70px;font-size:10px;line-height:10px;color:#fff;transform:scale(0.9226,1);transform-origin:0 8.50px;">2 Mar 05:00</div><div class="t gp" style="left:582.60px;top:273.70px;font-size:10px;line-height:10px;color:#fff;transform:scale(0.9226,1);transform-origin:0 8.50px;">2 Mar 09:00</div><div class="t gp" style="left:646.60px;top:273.70px;font-size:10px;line-height:10px;color:#fff;transform:scale(0.9226,1);transform-origin:0 8.50px;">2 Mar 13:00</div><div class="t gp" style="left:710.60px;top:273.70px;font-size:10px;line-height:10px;color:#fff;transform:scale(0.9226,1);transform-origin:0 8.50px;">2 Mar 17:00</div><div class="t gp" style="left:774.60px;top:273.70px;font-size:10px;line-height:10px;color:#fff;transform:scale(0.9226,1);transform-origin:0 8.50px;">2 Mar 21:00</div><div class="t gp" style="left:838.60px;top:273.70px;font-size:10px;line-height:10px;color:#fff;transform:scale(0.9226,1);transform-origin:0 8.50px;">3 Mar 01:00</div><div style="left:195px;top:289px;width:901px;height:2px;background:#fff;"></div><div style="left:195px;top:291px;width:901px;height:1px;background:#000;"></div><div style="left:196px;top:292px;width:900px;height:19px;background:#f0f0f0;"></div><div style="left:195px;top:289px;width:1px;height:22px;background:#808080;"></div><div style="left:196px;top:311px;width:900px;height:1px;background:#f8f8f8;"></div><div style="left:196px;top:312px;width:900px;height:3px;background:#fdfdfd;"></div><div style="left:792px;top:291px;width:121px;height:19px;background:#000;"></div><div style="left:793px;top:289px;width:119px;height:20px;background:#fff;"></div><div style="left:793px;top:310px;width:120px;height:1px;background:#b8b8b8;"></div><div class="t " style="left:211.23px;top:294.35px;font-size:12.5px;line-height:12.5px;color:#7e7e7e;transform:scale(0.8703,1);transform-origin:0 10.25px;">USDJPY,M15</div><div class="t " style="left:299.25px;top:294.35px;font-size:12.5px;line-height:12.5px;color:#7e7e7e;transform:scale(0.8545,1);transform-origin:0 10.25px;">USDJPY,H4</div><div class="t " style="left:380.45px;top:294.35px;font-size:12.5px;line-height:12.5px;color:#7e7e7e;transform:scale(0.8513,1);transform-origin:0 10.25px;">USDJPY,Daily</div><div class="t " style="left:470.45px;top:294.35px;font-size:12.5px;line-height:12.5px;color:#7e7e7e;transform:scale(0.8479,1);transform-origin:0 10.25px;">EURUSD,M5</div><div class="t " style="left:554.90px;top:294.35px;font-size:12.5px;line-height:12.5px;color:#7e7e7e;transform:scale(0.8969,1);transform-origin:0 10.25px;">USOIL,M15</div><div class="t " style="left:636.24px;top:294.35px;font-size:12.5px;line-height:12.5px;color:#7e7e7e;transform:scale(0.8597,1);transform-origin:0 10.25px;">USDJPY,M1</div><div class="t " style="left:720.44px;top:294.35px;font-size:12.5px;line-height:12.5px;color:#7e7e7e;transform:scale(0.8612,1);transform-origin:0 10.25px;">USDJPY,M1</div><div style="left:288px;top:295px;width:1px;height:13px;background:#6e6e6e;"></div><div style="left:368px;top:295px;width:1px;height:13px;background:#6e6e6e;"></div><div style="left:460px;top:295px;width:1px;height:13px;background:#6e6e6e;"></div><div style="left:544px;top:295px;width:1px;height:13px;background:#6e6e6e;"></div><div style="left:624px;top:295px;width:1px;height:13px;background:#6e6e6e;"></div><div style="left:708px;top:295px;width:1px;height:13px;background:#6e6e6e;"></div><div class="t " style="left:802.93px;top:294.35px;font-size:12.5px;line-height:12.5px;color:#000;transform:scale(0.8682,1);transform-origin:0 10.25px;">EURJPY,H1 (visual)</div><svg style="left:1070px;top:295px" width="26" height="10" viewBox="0 0 26 10"><path d="M6 2 v6 l-3.5 -3z M21.5 2 v6 l3.5 -3z" fill="#8c8c8c"/></svg><div style="left:0px;top:311px;width:4px;height:18px;background:#e6e6e6;"></div><div style="left:0px;top:329px;width:3px;height:36px;background:#c3d2e6;"></div><div style="left:3px;top:329px;width:1px;height:36px;background:#e4e9f0;"></div><div style="left:0px;top:365px;width:4px;height:21px;background:#f0f0f0;"></div><div style="left:0px;top:386px;width:3px;height:236px;background:#adc6e6;"></div><div style="left:3px;top:386px;width:1px;height:236px;background:#dfe6f0;"></div><svg style="left:0;top:330px" width="4" height="34" viewBox="0 0 4 34"><path d="M3 3 q-3 0 -2.5 3.5 q0 3 2.5 3" stroke="#222" fill="none" stroke-width="1.2"/><path d="M0 27 l2 2 l1.5 3" stroke="#222" fill="none" stroke-width="1.2"/></svg><div style="left:4px;top:315px;width:1092px;height:1px;background:#a0a0a0;"></div><div style="left:4px;top:315px;width:1px;height:50px;background:#a0a0a0;"></div><div style="left:5px;top:316px;width:1091px;height:26px;background:#fff;"></div><div style="left:104px;top:316px;width:1px;height:26px;background:#e2e2e2;"></div><div style="left:224px;top:316px;width:1px;height:26px;background:#e2e2e2;"></div><div style="left:297px;top:316px;width:1px;height:26px;background:#e2e2e2;"></div><div style="left:370px;top:316px;width:1px;height:26px;background:#e2e2e2;"></div><div style="left:443px;top:316px;width:1px;height:26px;background:#e2e2e2;"></div><div style="left:568px;top:316px;width:1px;height:26px;background:#e2e2e2;"></div><div class="t " style="left:12.00px;top:322.60px;font-size:12px;line-height:12px;color:#000;transform:scale(0.9952,1);transform-origin:0 10.00px;">通貨<span class="k" style="width:18.24px"><span style="transform:scaleX(0.76)">ペア</span></span></div><div class="t " style="left:110.79px;top:322.60px;font-size:12px;line-height:12px;color:#000;transform:scale(1.0087,1);transform-origin:0 10.00px;">条件</div><div class="t " style="left:247.02px;top:322.60px;font-size:12px;line-height:12px;color:#000;transform:scale(0.9841,1);transform-origin:0 10.00px;"><span class="k" style="width:45.6px"><span style="transform:scaleX(0.76)">カウンター</span></span></div><div class="t " style="left:304.80px;top:322.60px;font-size:12px;line-height:12px;color:#000;transform:scale(1.0034,1);transform-origin:0 10.00px;">最大反復数</div><div class="t " style="left:388.99px;top:322.60px;font-size:12px;line-height:12px;color:#000;transform:scale(1.0106,1);transform-origin:0 10.00px;">間隔設定</div><div class="t " style="left:514.81px;top:322.60px;font-size:12px;line-height:12px;color:#000;transform:scale(0.9936,1);transform-origin:0 10.00px;">有効期限</div><div class="t " style="left:575.80px;top:322.60px;font-size:12px;line-height:12px;color:#000;transform:scale(0.9729,1);transform-origin:0 10.00px;">音声設定</div><div style="left:5px;top:342px;width:1091px;height:1px;background:#000;"></div><div style="left:5px;top:343px;width:1091px;height:22px;background:#f0f0f0;"></div><div style="left:241px;top:342px;width:78px;height:20px;background:#000;"></div><div style="left:242px;top:342px;width:76px;height:19px;background:#fff;"></div><div style="left:242px;top:362px;width:78px;height:1px;background:#a8a8a8;"></div><div class="t " style="left:17.50px;top:346.20px;font-size:12px;line-height:12px;color:#7e7e7e;transform:scale(0.9783,1);transform-origin:0 10.00px;">取引</div><div class="t " style="left:61.30px;top:346.20px;font-size:12px;line-height:12px;color:#7e7e7e;transform:scale(0.9729,1);transform-origin:0 10.00px;">運用比率</div><div class="t " style="left:129.01px;top:346.20px;font-size:12px;line-height:12px;color:#7e7e7e;transform:scale(0.9851,1);transform-origin:0 10.00px;">口座履歴</div><div class="t " style="left:196.51px;top:346.20px;font-size:12px;line-height:12px;color:#7e7e7e;transform:scale(0.9941,1);transform-origin:0 10.00px;"><span class="k" style="width:36.48px"><span style="transform:scaleX(0.76)">ニュース</span></span></div><div class="t " style="left:328.31px;top:346.20px;font-size:12px;line-height:12px;color:#7e7e7e;transform:scale(0.9919,1);transform-origin:0 10.00px;"><span class="k" style="width:63.84px"><span style="transform:scaleX(0.76)">メールボックス</span></span></div><div class="t " style="left:417.03px;top:346.20px;font-size:12px;line-height:12px;color:#7e7e7e;transform:scale(0.9651,1);transform-origin:0 10.00px;"><span class="k" style="width:45.6px"><span style="transform:scaleX(0.76)">マーケット</span></span></div><div class="t " style="left:497.00px;top:346.20px;font-size:12px;line-height:12px;color:#7e7e7e;transform:scale(0.9292,1);transform-origin:0 10.00px;">記事</div><div class="t " style="left:539.84px;top:346.20px;font-size:12px;line-height:12px;color:#7e7e7e;transform:scale(0.9581,1);transform-origin:0 10.00px;"><span class="k" style="width:45.6px"><span style="transform:scaleX(0.76)">ライブラリ</span></span></div><div class="t " style="left:602.50px;top:346.20px;font-size:12px;line-height:12px;color:#7e7e7e;transform:scale(0.9811,1);transform-origin:0 10.00px;"><span class="k" style="width:54.72px"><span style="transform:scaleX(0.76)">エキスパート</span></span></div><div class="t " style="left:675.80px;top:346.20px;font-size:12px;line-height:12px;color:#7e7e7e;transform:scale(0.9729,1);transform-origin:0 10.00px;">操作履歴</div><div class="t " style="left:250.33px;top:346.20px;font-size:12px;line-height:12px;color:#000;transform:scale(0.9746,1);transform-origin:0 10.00px;"><span class="k" style="width:36.48px"><span style="transform:scaleX(0.76)">アラーム</span></span>設定</div><div style="left:51px;top:346px;width:1px;height:14px;background:#6e6e6e;"></div><div style="left:119px;top:346px;width:1px;height:14px;background:#6e6e6e;"></div><div style="left:187px;top:346px;width:1px;height:14px;background:#6e6e6e;"></div><div style="left:408px;top:346px;width:1px;height:14px;background:#6e6e6e;"></div><div style="left:486px;top:346px;width:1px;height:14px;background:#6e6e6e;"></div><div style="left:530px;top:346px;width:1px;height:14px;background:#6e6e6e;"></div><div style="left:592px;top:346px;width:1px;height:14px;background:#6e6e6e;"></div><div style="left:666px;top:346px;width:1px;height:14px;background:#6e6e6e;"></div><div style="left:733px;top:346px;width:1px;height:14px;background:#6e6e6e;"></div><div class="t " style="left:393.20px;top:352.25px;font-size:8.5px;line-height:8.5px;color:#e8322e;font-weight:bold;">6</div><div class="t " style="left:462.20px;top:352.25px;font-size:8.5px;line-height:8.5px;color:#e8322e;font-weight:bold;transform:scale(0.9643,1);transform-origin:0 7.25px;">107</div><div style="left:4px;top:365px;width:1092px;height:2px;background:#fcfcfc;"></div><div style="left:0px;top:367px;width:1096px;height:1px;background:#a6a6a6;"></div><div style="left:4px;top:368px;width:1092px;height:4px;background:#f0f0f0;"></div><div style="left:4px;top:370px;width:1092px;height:1px;background:#f8f8f8;"></div><div style="left:4px;top:372px;width:1092px;height:1px;background:#a0a0a0;"></div><div style="left:4px;top:372px;width:1px;height:250px;background:#a0a0a0;"></div><div style="left:5px;top:373px;width:1091px;height:249px;background:#fff;"></div><svg id="graph" style="left:5px;top:373px" width="1091" height="249" viewBox="5 373 1091 249" shape-rendering="crispEdges"><path d="M41.5 378 V561 M41.5 564 V567" stroke="#c4c4c4" stroke-dasharray="3 3"/><path d="M41.5 608 v2" stroke="#000"/><path d="M73.5 378 V561 M73.5 564 V567" stroke="#c4c4c4" stroke-dasharray="3 3"/><path d="M73.5 608 v2" stroke="#000"/><path d="M105.5 378 V561 M105.5 564 V567" stroke="#c4c4c4" stroke-dasharray="3 3"/><path d="M105.5 608 v2" stroke="#000"/><path d="M137.5 378 V561 M137.5 564 V567" stroke="#c4c4c4" stroke-dasharray="3 3"/><path d="M137.5 608 v2" stroke="#000"/><path d="M169.5 378 V561 M169.5 564 V567" stroke="#c4c4c4" stroke-dasharray="3 3"/><path d="M169.5 608 v2" stroke="#000"/><path d="M201.5 378 V561 M201.5 564 V567" stroke="#c4c4c4" stroke-dasharray="3 3"/><path d="M201.5 608 v2" stroke="#000"/><path d="M233.5 378 V561 M233.5 564 V567" stroke="#c4c4c4" stroke-dasharray="3 3"/><path d="M233.5 608 v2" stroke="#000"/><path d="M265.5 378 V561 M265.5 564 V567" stroke="#c4c4c4" stroke-dasharray="3 3"/><path d="M265.5 608 v2" stroke="#000"/><path d="M297.5 378 V561 M297.5 564 V567" stroke="#c4c4c4" stroke-dasharray="3 3"/><path d="M297.5 608 v2" stroke="#000"/><path d="M329.5 378 V561 M329.5 564 V567" stroke="#c4c4c4" stroke-dasharray="3 3"/><path d="M329.5 608 v2" stroke="#000"/><path d="M361.5 378 V561 M361.5 564 V567" stroke="#c4c4c4" stroke-dasharray="3 3"/><path d="M361.5 608 v2" stroke="#000"/><path d="M393.5 378 V561 M393.5 564 V567" stroke="#c4c4c4" stroke-dasharray="3 3"/><path d="M393.5 608 v2" stroke="#000"/><path d="M425.5 378 V561 M425.5 564 V567" stroke="#c4c4c4" stroke-dasharray="3 3"/><path d="M425.5 608 v2" stroke="#000"/><path d="M457.5 378 V561 M457.5 564 V567" stroke="#c4c4c4" stroke-dasharray="3 3"/><path d="M457.5 608 v2" stroke="#000"/><path d="M489.5 378 V561 M489.5 564 V567" stroke="#c4c4c4" stroke-dasharray="3 3"/><path d="M489.5 608 v2" stroke="#000"/><path d="M521.5 378 V561 M521.5 564 V567" stroke="#c4c4c4" stroke-dasharray="3 3"/><path d="M521.5 608 v2" stroke="#000"/><path d="M553.5 378 V561 M553.5 564 V567" stroke="#c4c4c4" stroke-dasharray="3 3"/><path d="M553.5 608 v2" stroke="#000"/><path d="M585.5 378 V561 M585.5 564 V567" stroke="#c4c4c4" stroke-dasharray="3 3"/><path d="M585.5 608 v2" stroke="#000"/><path d="M617.5 378 V561 M617.5 564 V567" stroke="#c4c4c4" stroke-dasharray="3 3"/><path d="M617.5 608 v2" stroke="#000"/><path d="M649.5 378 V561 M649.5 564 V567" stroke="#c4c4c4" stroke-dasharray="3 3"/><path d="M649.5 608 v2" stroke="#000"/><path d="M681.5 378 V561 M681.5 564 V567" stroke="#c4c4c4" stroke-dasharray="3 3"/><path d="M681.5 608 v2" stroke="#000"/><path d="M713.5 378 V561 M713.5 564 V567" stroke="#c4c4c4" stroke-dasharray="3 3"/><path d="M713.5 608 v2" stroke="#000"/><path d="M745.5 378 V561 M745.5 564 V567" stroke="#c4c4c4" stroke-dasharray="3 3"/><path d="M745.5 608 v2" stroke="#000"/><path d="M777.5 378 V561 M777.5 564 V567" stroke="#c4c4c4" stroke-dasharray="3 3"/><path d="M777.5 608 v2" stroke="#000"/><path d="M809.5 378 V561 M809.5 564 V567" stroke="#c4c4c4" stroke-dasharray="3 3"/><path d="M809.5 608 v2" stroke="#000"/><path d="M841.5 378 V561 M841.5 564 V567" stroke="#c4c4c4" stroke-dasharray="3 3"/><path d="M841.5 608 v2" stroke="#000"/><path d="M873.5 378 V561 M873.5 564 V567" stroke="#c4c4c4" stroke-dasharray="3 3"/><path d="M873.5 608 v2" stroke="#000"/><path d="M905.5 378 V561 M905.5 564 V567" stroke="#c4c4c4" stroke-dasharray="3 3"/><path d="M905.5 608 v2" stroke="#000"/><path d="M937.5 378 V561 M937.5 564 V567" stroke="#c4c4c4" stroke-dasharray="3 3"/><path d="M937.5 608 v2" stroke="#000"/><path d="M969.5 378 V561 M969.5 564 V567" stroke="#c4c4c4" stroke-dasharray="3 3"/><path d="M969.5 608 v2" stroke="#000"/><path d="M1001.5 378 V561 M1001.5 564 V567" stroke="#c4c4c4" stroke-dasharray="3 3"/><path d="M1001.5 608 v2" stroke="#000"/><path d="M1033.5 378 V561 M1033.5 564 V567" stroke="#c4c4c4" stroke-dasharray="3 3"/><path d="M1033.5 608 v2" stroke="#000"/><path d="M10 400.5 H1056" stroke="#c4c4c4" stroke-dasharray="3 3"/><path d="M1057 400.5 h2" stroke="#000"/><path d="M10 432.5 H1056" stroke="#c4c4c4" stroke-dasharray="3 3"/><path d="M1057 432.5 h2" stroke="#000"/><path d="M10 464.5 H1056" stroke="#c4c4c4" stroke-dasharray="3 3"/><path d="M1057 464.5 h2" stroke="#000"/><path d="M10 496.5 H1056" stroke="#c4c4c4" stroke-dasharray="3 3"/><path d="M1057 496.5 h2" stroke="#000"/><path d="M10 528.5 H1056" stroke="#c4c4c4" stroke-dasharray="3 3"/><path d="M1057 528.5 h2" stroke="#000"/><path d="M1057 561.5 h2" stroke="#000"/><rect x="9.5" y="377.5" width="1047" height="184" fill="none" stroke="#000"/><rect x="9.5" y="563.5" width="1047" height="44" fill="none" stroke="#000"/><rect x="10" y="567" width="1045" height="40" fill="#00aa00"/><rect x="67" y="567" width="1" height="8" fill="#fff"/><rect x="86" y="567" width="1" height="8" fill="#fff"/><rect x="157" y="567" width="1" height="8" fill="#fff"/><rect x="231" y="567" width="1" height="8" fill="#fff"/><rect x="297" y="567" width="1" height="8" fill="#fff"/><rect x="358" y="567" width="1" height="8" fill="#fff"/><rect x="421" y="567" width="1" height="8" fill="#fff"/><rect x="429" y="567" width="1" height="8" fill="#fff"/><rect x="449" y="567" width="1" height="8" fill="#fff"/><rect x="477" y="567" width="1" height="8" fill="#fff"/><rect x="519" y="567" width="1" height="8" fill="#fff"/><rect x="544" y="567" width="1" height="8" fill="#fff"/><rect x="619" y="567" width="1" height="8" fill="#fff"/><rect x="627" y="567" width="1" height="8" fill="#fff"/><rect x="631" y="567" width="1" height="8" fill="#fff"/><rect x="649" y="567" width="1" height="8" fill="#fff"/><rect x="657" y="567" width="1" height="8" fill="#fff"/><rect x="665" y="567" width="1" height="8" fill="#fff"/><rect x="731" y="567" width="1" height="8" fill="#fff"/><rect x="734" y="567" width="1" height="8" fill="#fff"/><rect x="756" y="567" width="1" height="8" fill="#fff"/><rect x="764" y="567" width="1" height="8" fill="#fff"/><rect x="862" y="567" width="1" height="8" fill="#fff"/><rect x="876" y="567" width="1" height="8" fill="#fff"/><rect x="886" y="567" width="1" height="8" fill="#fff"/><rect x="901" y="567" width="1" height="8" fill="#fff"/><rect x="957" y="567" width="1" height="8" fill="#fff"/><rect x="965" y="567" width="1" height="8" fill="#fff"/><rect x="1005" y="567" width="1" height="8" fill="#fff"/><rect x="1047" y="567" width="1" height="8" fill="#fff"/><rect x="182" y="567" width="1" height="15" fill="#fff"/><rect x="504" y="567" width="2" height="8" fill="#fff"/><rect x="721" y="567" width="2" height="8" fill="#fff"/><rect x="12" y="567" width="20" height="10" fill="#fff"/></svg><svg style="left:5px;top:373px" width="1091" height="249" viewBox="5 373 1091 249"><path d="M10 552.5 L13.0 552.41 L16.0 550.47 L19.0 550.44 L22.0 549.11 L25 548.8 L28.1 547.62 L31.2 548.01 L34.4 546.41 L37.5 545.8 L40.8 544.97 L44.2 543.44 L47.5 542 L48.8 544.5 L51.7 543.2 L54.6 543.7 L57.5 543 L60.2 542.06 L62.9 541.92 L65.7 542.05 L68.4 540.33 L71.1 540.34 L73.8 539.5 L75 541.8 L77.9 541.17 L80.9 540.44 L83.8 540.8 L85 545 L90 543.8 L93.3 543.21 L96.7 541.43 L100 540.5 L102.8 540.21 L105.5 539.6 L108.3 537.72 L111.0 537.83 L113.8 537 L115.5 535.5 L117 539.5 L120.2 537.82 L123.5 536.76 L126.8 536.54 L130 534.5 L133.1 533.02 L136.2 532.27 L139.4 530.58 L142.5 529.3 L144.3 533.8 L147.2 531.73 L150 531.3 L155 530 L156.3 531.8 L159.4 531.59 L162.5 530.8 L165.4 529.64 L168.3 529.28 L171.2 528.89 L174.2 526.8 L177.1 526.56 L180 525.5 L181.3 532.5 L184.2 530.89 L187.1 529.48 L190 528.8 L193.3 528.34 L196.7 526.47 L200 525.5 L203.1 525.17 L206.2 524.31 L209.4 522.47 L212.5 522.5 L215.5 521.51 L218.5 519.84 L221.5 519.04 L224.5 518.77 L227.5 516.8 L230.6 515.79 L233.8 515.59 L236.9 514.36 L240 513.8 L243.8 515.8 L246.5 513.98 L249.2 514.12 L251.9 512.46 L254.6 511.95 L257.3 511.16 L260 509.5 L263.2 508.0 L266.3 507.83 L269.5 506.8 L272.8 512.5 L275.9 511.74 L279 511.8 L280.3 515 L283.2 513.96 L286.1 514.42 L289 513 L292.5 512.01 L296 511.3 L297.8 518.3 L300.6 518.19 L303.4 517.41 L306.2 515.97 L309 516.3 L312.0 515.63 L315.0 514.2 L318.0 513.73 L321.0 513.5 L324 511.8 L327.0 510.56 L330.0 510.28 L333.0 508.91 L336.0 507.7 L339 507.5 L341.8 507.65 L344.7 506.54 L347.5 506.64 L350.3 506.28 L353.2 504.69 L356 505 L357 509.3 L360.0 508.35 L363.0 506.76 L366.0 505.89 L369 505 L372.0 505.32 L375.0 503.8 L378.0 503.81 L381.0 502.93 L384 502.5 L387.0 501.08 L390.0 501.64 L393.0 500.49 L396.0 500.37 L399 499.5 L402.3 498.54 L405.7 495.64 L409 494.5 L412.1 493.51 L415.2 491.88 L418.4 490.62 L421.5 490 L424.2 490.35 L427 489.3 L428.3 493.3 L431.0 492.56 L433.6 492.44 L436.3 491.68 L439 490.8 L442.1 489.34 L445.3 489.5 L447.8 492 L451.6 491.57 L455.3 490.8 L457.8 493 L460.6 492.42 L463.4 492.51 L466.2 493.09 L469 492 L472.1 490.77 L475.2 490.38 L478.4 489.01 L481.5 488.3 L484.4 486.72 L487.4 487.11 L490.3 485.8 L492 489.5 L495.2 488.46 L498.3 488.05 L501.5 486.8 L503.3 495.5 L506.8 495.22 L510.3 493.8 L514 489.5 L517.3 487.6 L520.7 487.14 L524 485.8 L526.8 484.36 L529.6 483.36 L532.4 483.42 L535.2 481.42 L538 480.5 L540.9 480.67 L543.9 480.23 L546.8 480 L549.3 478 L552.1 476.4 L554.9 476.76 L557.7 475.51 L560.5 475 L563.4 474.17 L566.4 473.79 L569.3 472 L572.4 471.81 L575.5 472.5 L576.8 476.3 L579.5 475.85 L582.3 474.78 L585.0 473.88 L587.8 474.52 L590.5 473.3 L593.8 472.1 L597.2 471.47 L600.5 470 L603.2 469.55 L605.8 467.56 L608.5 467.5 L610.5 470 L615.5 470 L618 474.3 L621.8 473.17 L625.5 471.8 L630.5 471.8 L631.8 473 L634.5 472.16 L637.3 471.87 L640.0 472.35 L642.8 470.78 L645.5 470.5 L648.6 470.13 L651.8 469.14 L654.9 467.81 L658 468 L660.9 467.89 L663.8 467 L665 473.8 L668.2 473.52 L671.5 473.83 L674.8 474.1 L678 473.3 L681.1 471.77 L684.2 471.5 L687.4 470.09 L690.5 469.5 L693.8 468.55 L697.2 469.25 L700.5 468 L703.2 468.3 L706 468.8 L707.5 472 L710.1 471.84 L712.8 471.19 L715.4 469.66 L718 470 L723 469.3 L725.5 471.8 L728.5 471.79 L731.5 471.13 L734.5 471.25 L737.5 471.84 L740.5 470.8 L741.8 472.5 L744.9 471.73 L748.0 471.82 L751.2 470.99 L754.3 470.8 L755.5 475.5 L758.6 474.23 L761.8 474.94 L764.9 473.75 L768 473.3 L771.3 472.97 L774.7 472.48 L778 471.3 L781.1 470.21 L784.2 470.64 L787.4 469.83 L790.5 469.8 L793.4 468.68 L796.3 468.91 L799.2 467.06 L802.1 466.64 L805 465.5 L807.9 464.81 L810.8 463.25 L813.8 463.7 L816.7 462.52 L819.6 462.19 L822.5 461.3 L825.4 460.89 L828.3 458.47 L831.2 457.9 L834.2 456.32 L837.1 454.89 L840 454.3 L843.1 453.78 L846.2 451.82 L849.4 451.04 L852.5 449.5 L856.2 449.08 L860 448 L861.8 450.8 L864.5 448.48 L867.3 447.93 L870 446.3 L874.5 444.5 L876.3 448 L879.2 447.15 L882.1 446.79 L885 446.3 L888 454.5 L891.5 454.01 L895 451.8 L897.9 451.2 L900.9 451.33 L903.8 450.8 L906.6 448.91 L909.4 446.5 L912.2 446.0 L915 443.8 L918.1 441.62 L921.2 439.93 L924.4 438.21 L927.5 435.5 L930.8 433.46 L934.2 432.77 L937.5 431.3 L939.5 434.5 L942.1 432.92 L944.8 431.6 L947.4 431.54 L950 429.5 L955 428.3 L956.8 432 L959.6 429.64 L962.5 427.5 L964.3 431.8 L967.1 431.19 L970 430 L972.9 428.24 L975.9 425.34 L978.8 424.3 L981.3 426.8 L984.0 425.32 L986.8 423.19 L989.5 421.79 L992.3 420.83 L995 418.3 L997.9 416.79 L1000.7 416.19 L1003.6 414.71 L1006.4 413.16 L1009.3 413.33 L1012.1 411.55 L1015 410.5 L1018.0 409.32 L1021.0 407.96 L1024.0 405.23 L1027.0 404.58 L1030 403 L1033.0 401.5 L1036.0 400.4 L1039.0 400.26 L1042.0 398.02 L1045 397 L1048.2 396.32 L1051.3 395.17 L1054.5 394.3" fill="none" stroke="#0000b0" stroke-width="1.75" stroke-linejoin="round"/></svg><div class="t " style="left:12.80px;top:382.35px;font-size:8.5px;line-height:8.5px;color:#0000c8;font-weight:bold;transform:scale(1.0353,1);transform-origin:0 7.25px;">残高</div><div class="t " style="left:33.80px;top:381.35px;font-size:9.5px;line-height:9.5px;color:#5a40b0;transform:scale(1.2000,1);transform-origin:0 8.25px;">/</div><div class="t " style="left:40.30px;top:382.35px;font-size:8.5px;line-height:8.5px;color:#00b000;font-weight:bold;transform:scale(1.0571,1);transform-origin:0 7.25px;">有効証拠金</div><div class="t " style="left:13.00px;top:568.15px;font-size:8.5px;line-height:8.5px;color:#000;font-weight:bold;transform:scale(1.0353,1);transform-origin:0 7.25px;">数量</div><div class="t gp" style="left:1061.30px;top:397.95px;font-size:9.5px;line-height:9.5px;color:#000;transform:scale(0.9037,1);transform-origin:0 8.25px;">26514</div><div class="t gp" style="left:1061.30px;top:429.95px;font-size:9.5px;line-height:9.5px;color:#000;transform:scale(0.9037,1);transform-origin:0 8.25px;">23040</div><div class="t gp" style="left:1061.30px;top:461.95px;font-size:9.5px;line-height:9.5px;color:#000;transform:scale(0.9037,1);transform-origin:0 8.25px;">19565</div><div class="t gp" style="left:1061.30px;top:493.95px;font-size:9.5px;line-height:9.5px;color:#000;transform:scale(0.9037,1);transform-origin:0 8.25px;">16090</div><div class="t gp" style="left:1061.30px;top:525.95px;font-size:9.5px;line-height:9.5px;color:#000;transform:scale(0.9037,1);transform-origin:0 8.25px;">12615</div><div class="t gp" style="left:1061.30px;top:558.95px;font-size:9.5px;line-height:9.5px;color:#000;transform:scale(0.9286,1);transform-origin:0 8.25px;">9141</div><div class="t gp" style="left:10.30px;top:610.85px;font-size:9.5px;line-height:9.5px;color:#000;transform:scale(0.9200,1);transform-origin:0 8.25px;">0</div><div class="t gp" style="left:31.40px;top:610.85px;font-size:9.5px;line-height:9.5px;color:#000;transform:scale(0.8727,1);transform-origin:0 8.25px;">78</div><div class="t gp" style="left:58.70px;top:610.85px;font-size:9.5px;line-height:9.5px;color:#000;transform:scale(0.8938,1);transform-origin:0 8.25px;">147</div><div class="t gp" style="left:90.70px;top:610.85px;font-size:9.5px;line-height:9.5px;color:#000;transform:scale(0.8938,1);transform-origin:0 8.25px;">217</div><div class="t gp" style="left:122.70px;top:610.85px;font-size:9.5px;line-height:9.5px;color:#000;transform:scale(0.8938,1);transform-origin:0 8.25px;">286</div><div class="t gp" style="left:154.70px;top:610.85px;font-size:9.5px;line-height:9.5px;color:#000;transform:scale(0.8938,1);transform-origin:0 8.25px;">356</div><div class="t gp" style="left:186.70px;top:610.85px;font-size:9.5px;line-height:9.5px;color:#000;transform:scale(0.8938,1);transform-origin:0 8.25px;">425</div><div class="t gp" style="left:218.70px;top:610.85px;font-size:9.5px;line-height:9.5px;color:#000;transform:scale(0.8938,1);transform-origin:0 8.25px;">495</div><div class="t gp" style="left:250.70px;top:610.85px;font-size:9.5px;line-height:9.5px;color:#000;transform:scale(0.8938,1);transform-origin:0 8.25px;">564</div><div class="t gp" style="left:282.70px;top:610.85px;font-size:9.5px;line-height:9.5px;color:#000;transform:scale(0.8938,1);transform-origin:0 8.25px;">633</div><div class="t gp" style="left:314.70px;top:610.85px;font-size:9.5px;line-height:9.5px;color:#000;transform:scale(0.8938,1);transform-origin:0 8.25px;">703</div><div class="t gp" style="left:346.70px;top:610.85px;font-size:9.5px;line-height:9.5px;color:#000;transform:scale(0.8938,1);transform-origin:0 8.25px;">772</div><div class="t gp" style="left:378.70px;top:610.85px;font-size:9.5px;line-height:9.5px;color:#000;transform:scale(0.8938,1);transform-origin:0 8.25px;">842</div><div class="t gp" style="left:410.70px;top:610.85px;font-size:9.5px;line-height:9.5px;color:#000;transform:scale(0.9533,1);transform-origin:0 8.25px;">911</div><div class="t gp" style="left:442.70px;top:610.85px;font-size:9.5px;line-height:9.5px;color:#000;transform:scale(0.8938,1);transform-origin:0 8.25px;">980</div><div class="t gp" style="left:469.80px;top:610.85px;font-size:9.5px;line-height:9.5px;color:#000;transform:scale(0.9143,1);transform-origin:0 8.25px;">1050</div><div class="t gp" style="left:501.80px;top:610.85px;font-size:9.5px;line-height:9.5px;color:#000;transform:scale(0.9600,1);transform-origin:0 8.25px;">1119</div><div class="t gp" style="left:533.80px;top:610.85px;font-size:9.5px;line-height:9.5px;color:#000;transform:scale(0.9143,1);transform-origin:0 8.25px;">1189</div><div class="t gp" style="left:565.80px;top:610.85px;font-size:9.5px;line-height:9.5px;color:#000;transform:scale(0.9143,1);transform-origin:0 8.25px;">1258</div><div class="t gp" style="left:597.80px;top:610.85px;font-size:9.5px;line-height:9.5px;color:#000;transform:scale(0.9143,1);transform-origin:0 8.25px;">1327</div><div class="t gp" style="left:629.80px;top:610.85px;font-size:9.5px;line-height:9.5px;color:#000;transform:scale(0.9143,1);transform-origin:0 8.25px;">1397</div><div class="t gp" style="left:661.80px;top:610.85px;font-size:9.5px;line-height:9.5px;color:#000;transform:scale(0.9143,1);transform-origin:0 8.25px;">1466</div><div class="t gp" style="left:693.80px;top:610.85px;font-size:9.5px;line-height:9.5px;color:#000;transform:scale(0.9143,1);transform-origin:0 8.25px;">1536</div><div class="t gp" style="left:725.80px;top:610.85px;font-size:9.5px;line-height:9.5px;color:#000;transform:scale(0.9143,1);transform-origin:0 8.25px;">1605</div><div class="t gp" style="left:757.80px;top:610.85px;font-size:9.5px;line-height:9.5px;color:#000;transform:scale(0.9143,1);transform-origin:0 8.25px;">1675</div><div class="t gp" style="left:789.80px;top:610.85px;font-size:9.5px;line-height:9.5px;color:#000;transform:scale(0.9143,1);transform-origin:0 8.25px;">1744</div><div class="t gp" style="left:821.80px;top:610.85px;font-size:9.5px;line-height:9.5px;color:#000;transform:scale(0.9143,1);transform-origin:0 8.25px;">1813</div><div class="t gp" style="left:853.80px;top:610.85px;font-size:9.5px;line-height:9.5px;color:#000;transform:scale(0.9143,1);transform-origin:0 8.25px;">1883</div><div class="t gp" style="left:885.80px;top:610.85px;font-size:9.5px;line-height:9.5px;color:#000;transform:scale(0.9143,1);transform-origin:0 8.25px;">1952</div><div class="t gp" style="left:917.80px;top:610.85px;font-size:9.5px;line-height:9.5px;color:#000;transform:scale(0.9143,1);transform-origin:0 8.25px;">2022</div><div class="t gp" style="left:949.80px;top:610.85px;font-size:9.5px;line-height:9.5px;color:#000;transform:scale(0.9143,1);transform-origin:0 8.25px;">2091</div><div class="t gp" style="left:981.80px;top:610.85px;font-size:9.5px;line-height:9.5px;color:#000;transform:scale(0.9143,1);transform-origin:0 8.25px;">2160</div><div class="t gp" style="left:1013.80px;top:610.85px;font-size:9.5px;line-height:9.5px;color:#000;transform:scale(0.9143,1);transform-origin:0 8.25px;">2230</div></div></body></html>
